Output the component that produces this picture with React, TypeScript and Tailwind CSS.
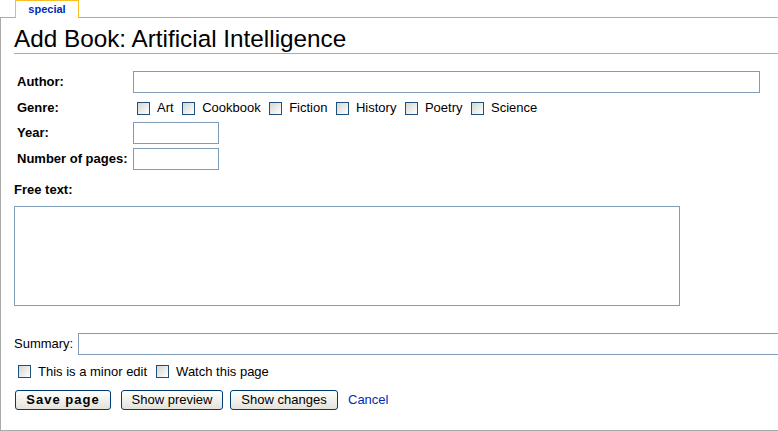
import React from 'react';

const genres = ['Art', 'Cookbook', 'Fiction', 'History', 'Poetry', 'Science'];

const Check: React.FC<{ label: string }> = ({ label }) => (
  <label className="flex items-center">
    <span className="block w-[13px] h-[13px] border border-[#1c5180] bg-linear-to-br from-[#d6d6d0] to-white" />
    <span className="ml-[7px] whitespace-nowrap">{label}</span>
  </label>
);

export default function App() {
  return (
    <div
      className="w-[778px] h-[431px] overflow-hidden bg-white text-black text-[13px] leading-[16px]"
      style={{ fontFamily: '"Liberation Sans", Arial, sans-serif' }}
    >
      {/* Tabs */}
      <div className="h-[17px] pl-[15px] flex">
        <div className="relative z-10 h-[18px] w-[64px] bg-white border border-b-0 border-[#fabd23] text-center text-[11px] leading-[16px] font-bold text-[#002bb8]">
          special
        </div>
      </div>

      {/* Content box */}
      <div className="w-[800px] h-[414px] border-t border-l border-b border-[#aaaaaa] pl-[13px]">
        <h1 className="pt-[7px] text-[24.3px] leading-[28px] font-normal border-b border-[#aaaaaa]">
          Add Book: Artificial Intelligence
        </h1>

        {/* Form fields */}
        <div className="mt-[17px] ml-[3px] grid grid-cols-[116px_1fr] grid-rows-[22px_21px_22px_22px] gap-y-[4px] items-center font-bold">
          <div>Author:</div>
          <input className="h-[22px] w-[627px] border border-[#7f9db9] bg-white outline-none" />

          <div>Genre:</div>
          <div className="flex items-center gap-x-[8.5px] pl-[4px] pt-[1px] font-normal">
            {genres.map((g) => (
              <Check key={g} label={g} />
            ))}
          </div>

          <div>Year:</div>
          <input className="h-[22px] w-[86px] border border-[#7f9db9] bg-white outline-none" />

          <div className="whitespace-nowrap">Number of pages:</div>
          <input className="h-[22px] w-[86px] border border-[#7f9db9] bg-white outline-none" />
        </div>

        <div className="mt-[12px] font-bold">Free text:</div>
        <textarea className="block mt-[8px] w-[666px] h-[100px] border border-[#7f9db9] bg-white outline-none resize-none" />

        {/* Summary */}
        <div className="mt-[27px] flex items-center h-[22px]">
          <span>Summary:</span>
          <input className="ml-[5px] h-[22px] w-[710px] border border-[#7f9db9] bg-white outline-none" />
        </div>

        <div className="mt-[9px] h-[15px] flex items-center pl-[4px] gap-x-[9px]">
          <Check label="This is a minor edit" />
          <Check label="Watch this page" />
        </div>

        {/* Buttons */}
        <div className="mt-[11px] h-[20px] flex items-center">
          <button className="ml-[1px] w-[96px] h-[20px] border border-[#003c74] rounded-[3px] bg-linear-to-b from-white to-[#e4e2da] font-bold tracking-[1px] text-center">
            Save page
          </button>
          <button className="ml-[10px] w-[102px] h-[20px] border border-[#003c74] rounded-[3px] bg-linear-to-b from-white to-[#e4e2da] text-center">
            Show preview
          </button>
          <button className="ml-[7px] w-[108px] h-[20px] border border-[#003c74] rounded-[3px] bg-linear-to-b from-white to-[#e4e2da] text-center">
            Show changes
          </button>
          <a className="ml-[10px] text-[#002bb8]" href="#">
            Cancel
          </a>
        </div>
      </div>
    </div>
  );
}
